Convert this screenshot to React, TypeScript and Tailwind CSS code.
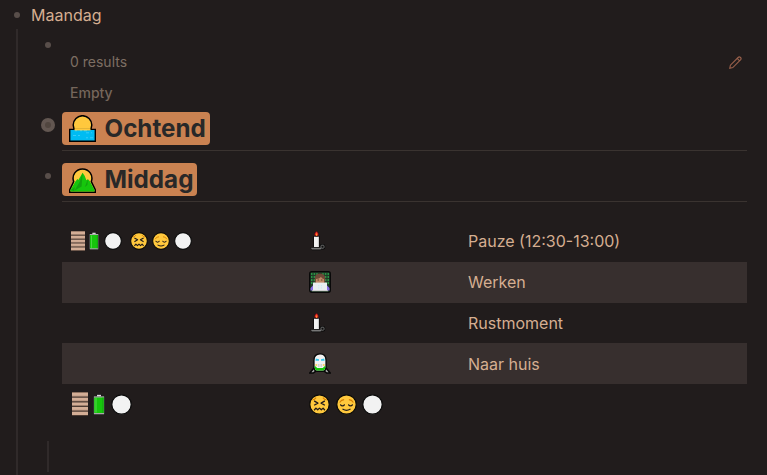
import React from "react";

type IconProps = { className?: string };

function Sunrise({ className }: IconProps) {
  return (
    <svg viewBox="0 0 27 27" className={className}>
      <circle cx="13.5" cy="10" r="9.3" fill="#ffc83d" stroke="#000" strokeWidth="1.5" />
      <path d="M.7 14.4h25.6v11.9H.7z" fill="#00bcf2" stroke="#000" strokeWidth="1.4" />
      <path d="M5.5 14.4h16" stroke="#ffc83d" strokeWidth="2" />
      <path d="M6 15.7h2m3 0h2m2 0h3" stroke="#8dc" strokeWidth=".7" />
      <path d="M4 20.5h3m2 0h2m6-2.7h3m2 0h1m-6 5h2m2 0h3" stroke="#45d1fb" strokeWidth=".8" />
    </svg>
  );
}

function Mountain({ className }: IconProps) {
  return (
    <svg viewBox="0 0 27 27" className={className}>
      <path d="M.7 26.3v-2.5l4-8.2a9.4 9.4 0 1 1 17.6 0l4 8.2v2.5z" fill="#ffc83d" stroke="#000" strokeWidth="1.5" />
      <path d="M1.4 25.6v-1.5l5-8.5 2-2.5 1 1 4.2-7.4 2 3 1.8 4.5 1.6-1 1.7 1.7 4.9 9.2v1.5z" fill="#16c60c" />
      <path d="m13.6 7-3 9-5 8.5 7-4zm5.3 6-3 8 2.5-2zM2 24l4-3-1 4z" fill="#13a10e" />
    </svg>
  );
}

function Planks({ className }: IconProps) {
  return (
    <svg viewBox="0 0 15 20" className={className} preserveAspectRatio="none">
      <path d="M0 0h15v20H0z" fill="#4b3a32" />
      <path d="M0 0h15v1H0z" fill="#8e715f" />
      <path d="M0 2.2h15M0 6.1h15M0 10h15M0 13.9h15M0 17.8h15" stroke="#d4ae96" strokeWidth="2.7" />
      <path d="M0 3.5h15M0 7.4h15M0 11.3h15M0 15.2h15" stroke="#a38370" strokeWidth=".6" />
    </svg>
  );
}

function Battery({ className }: IconProps) {
  return (
    <svg viewBox="0 0 12 21" className={className} preserveAspectRatio="none">
      <path d="M.2 2h3.4V.4h4.8V2h3.4v18.6H.2z" fill="#111" />
      <path d="M.8 2.3h10.4v18H.8z" fill="#aaa" />
      <path d="M4 .8h4v1.5H4z" fill="#ddd" />
      <path d="M1.2 3.5h9.6V19H1.2z" fill="#16c60c" />
      <path d="M3 4v14.5" stroke="#52dc49" strokeWidth="1" />
      <path d="M10 3.5V19" stroke="#13a10e" strokeWidth="1" />
    </svg>
  );
}

function Disc({ className }: IconProps) {
  return (
    <svg viewBox="0 0 22 22" className={className}>
      <circle cx="11" cy="11" r="10.2" fill="#f2f2f2" stroke="#080808" strokeWidth="1.3" />
    </svg>
  );
}

function Confounded({ className }: IconProps) {
  return (
    <svg viewBox="0 0 22 22" className={className}>
      <circle cx="11" cy="11" r="10.2" fill="#ffc83d" stroke="#080808" strokeWidth="1.3" />
      <path d="M3.6 6.2c1.6-.2 2.9-1 3.8-2.4m11 2.4c-1.6-.2-2.9-1-3.8-2.4" fill="none" stroke="#d67d00" strokeWidth="1.1" />
      <path d="m5.4 7.2 3.9 2.3-3.9 2.3m11.2-4.6-3.9 2.3 3.9 2.3M5.4 17l1.8-2.2L9.1 16.6l1.9-1.8 1.9 1.8 1.9-1.8 1.8 2.2" fill="none" stroke="#211b1b" strokeWidth="1.4" strokeLinejoin="round" />
    </svg>
  );
}

function Pensive({ className }: IconProps) {
  return (
    <svg viewBox="0 0 22 22" className={className}>
      <circle cx="11" cy="11" r="10.2" fill="#ffc83d" stroke="#080808" strokeWidth="1.3" />
      <path d="M3.8 8.8c1.1-1.8 2.7-2.8 4.7-2.9m9.7 2.9c-1.1-1.8-2.7-2.8-4.7-2.9" fill="none" stroke="#d67d00" strokeWidth="1.1" />
      <path d="M4.8 11.3c1.1 1.5 2.9 1.5 4 0m4.4 0c1.1 1.5 2.9 1.5 4 0M7.3 16c2.5 1.4 4.9 1.4 7.4 0" fill="none" stroke="#211b1b" strokeWidth="1.3" strokeLinecap="round" />
    </svg>
  );
}

function Candle({ className }: IconProps) {
  return (
    <svg viewBox="0 0 16 20" className={className}>
      <path d="M4 5.7h5V16H4z" fill="#f2f2f2" stroke="#080808" strokeWidth="1.3" paintOrder="stroke" />
      <path d="M8.4 6v9.8" stroke="#bbb" strokeWidth=".8" />
      <path d="M6.5.1C8.1 1.7 8.8 2.8 8.6 4c-.2 1.6-4 1.6-4.2 0-.2-1.3.7-2.4 2.1-3.9Z" fill="#e72727" stroke="#080808" strokeWidth=".5" />
      <path d="M6.5 2.5v2.2" stroke="#ff9a25" strokeWidth="1.1" />
      <path d="M.3 16h11.5l-1.3 3.3H2z" fill="#080808" />
      <rect x="11" y="14.2" width="3" height="3" rx=".8" fill="none" stroke="#080808" strokeWidth="2.5" />
      <path d="M.8 16.8h11l-1.3 1.8H2z" fill="#777" />
      <rect x="11" y="14.2" width="3" height="3" rx=".8" fill="none" stroke="#777" strokeWidth=".9" />
    </svg>
  );
}

function Worker({ className }: IconProps) {
  return (
    <svg viewBox="0 0 22 22" className={className}>
      <rect x=".7" y=".7" width="20.6" height="20.6" rx="2" fill="#203b27" stroke="#080808" strokeWidth="1.3" />
      <path d="M2.7 2v12M5.4 2v10M8 2v2m6-2v2m2.6-2v10m2.7-10v12" stroke="#2b9145" strokeWidth="1.5" strokeDasharray="2 1" />
      <path d="M1.5 19.5V17l3-3h13l3 3v2.5z" fill="#886ce4" />
      <path d="M5.8 12V7C6 4.2 8 2.5 11 2.5s5 1.7 5.2 4.5v5z" fill="#704938" />
      <path d="M7 8c2 0 4-.8 5-2.2.4 1.2 1.5 2 3 2.2v3.5c0 2.5-8 2.5-8 0z" fill="#c08a67" />
      <path d="M8.7 9h1m2.6 0h1" stroke="#38251e" strokeWidth="1" />
      <path d="M4 11.6h14V20H4z" fill="#e8edf0" />
      <path d="M9.2 14.6h1.1m1.6 0H13m-3.8 2.3h1.1m1.6 0H13" stroke="#c9e8f3" strokeWidth="1.1" />
      <path d="M3 19.7h16" stroke="#ccc" strokeWidth="1" />
    </svg>
  );
}

function Train({ className }: IconProps) {
  return (
    <svg viewBox="0 0 22 22" className={className}>
      <path d="M5.4 14.5.8 20h3.5l2.9-2.2h7.6l2.9 2.2h3.5l-4.6-5.5" fill="#aaa" stroke="#080808" strokeWidth="1.5" />
      <path d="M4.9 13V7.5C4.9 3.3 7.2.9 11 .9s6.1 2.4 6.1 6.6V13c0 3.5-1.4 5.3-3.2 5.3H8.1c-1.8 0-3.2-1.8-3.2-5.3Z" fill="#f2f2f2" stroke="#080808" strokeWidth="1.4" />
      <path d="M5.5 12.8c1.1.5 2 1.2 2.7 2.2h5.6c.7-1 1.6-1.7 2.7-2.2 0 3-.9 4.8-2.5 4.8H8c-1.6 0-2.5-1.8-2.5-4.8Z" fill="#16c60c" />
      <path d="m6.8 5.5 3.2.8v1.4H6.4zm8.4 0-3.2.8v1.4h3.6z" fill="#35c8ef" />
      <path d="M6.4 12h1.8m5.6 0h1.8" stroke="#ffc83d" strokeWidth="1.5" />
      <path d="M9.5 11v3M11 11v3m1.5-3v3" stroke="#bbb" strokeWidth=".6" />
    </svg>
  );
}

function Bullet() {
  return <span className="block size-[6px] rounded-full bg-[#584e4a]" />;
}

function Heading({ icon, children }: { icon: React.ReactNode; children: React.ReactNode }) {
  return (
    <div className="ml-[62px] mr-5 flex h-[39px] items-start border-b border-[#3a3330]">
      <h2 className="flex h-[33px] items-center rounded-[4px] bg-[#ca8251] pl-[7px] pr-1 text-[24.2px] leading-[33px] font-bold text-[#282828]">
        {icon}
        <span className="ml-[8.5px]">{children}</span>
      </h2>
    </div>
  );
}

export default function App() {
  return (
    <main className="relative flex h-[475px] w-[767px] flex-col overflow-hidden bg-[#211c1c] font-['Inter',sans-serif] text-[#d5ae91]">
      <span className="absolute top-[29px] left-4 h-[446px] w-[2px] bg-[#302a2a]" />
      <span className="absolute top-[441px] left-[47px] h-[31px] w-[2px] bg-[#302a2a]" />

      <div className="flex h-[30px] items-center pl-[14px] text-base">
        <Bullet />
        <span className="ml-[11px]">Maandag</span>
      </div>

      <section className="flex h-[82px] pl-[45px] text-sm text-[#7d6e63]">
        <div className="pt-[12px]"><Bullet /></div>
        <div className="ml-[19px] flex flex-1 flex-col pt-[22px]">
          <div className="flex h-5 items-center justify-between pr-[25px]">
            <span>0 results</span>
            <svg viewBox="0 0 13 13" className="size-[13px]" fill="none" stroke="#99604b" strokeWidth="1.1">
              <path d="m.8 12.2.6-3 7.7-7.7c.8-.8 1.6-.8 2.4 0s.8 1.6 0 2.4l-7.7 7.7zM8.2 2.4l2.4 2.4" />
            </svg>
          </div>
          <div className="mt-[11px] leading-5 font-medium text-[#75665b]">Empty</div>
        </div>
      </section>

      <section className="relative">
        <span className="absolute top-[6px] left-[41px] flex size-[14px] items-center justify-center rounded-full bg-[#635751]">
          <span className="size-[6px] rounded-full bg-[#51463f]" />
        </span>
        <Heading icon={<Sunrise className="size-[27px]" />}>Ochtend</Heading>
      </section>

      <section className="relative mt-3">
        <span className="absolute top-[10px] left-[45px]"><Bullet /></span>
        <Heading icon={<Mountain className="size-[27px]" />}>Middag</Heading>
      </section>

      <div className="mt-[19px] mr-5 ml-[62px] flex flex-col text-base">
        <div className="grid h-[41px] grid-cols-[247px_159px_1fr] items-center pb-[2px]">
          <div className="flex items-center pl-[9px]">
            <Planks className="h-5 w-[14px]" />
            <Battery className="ml-1 h-[18px] w-[10px]" />
            <Disc className="ml-[4.5px] size-[18px]" />
            <Confounded className="ml-[8px] size-[18px]" />
            <Pensive className="ml-1 size-[18px]" />
            <Disc className="ml-1 size-[18px]" />
          </div>
          <Candle className="ml-px h-5 w-4" />
          <span>Pauze (12:30-13:00)</span>
        </div>
        <div className="grid h-[41px] grid-cols-[247px_159px_1fr] items-center bg-[#372f2e] pb-px">
          <span />
          <Worker className="size-[22px]" />
          <span>Werken</span>
        </div>
        <div className="grid h-10 grid-cols-[247px_159px_1fr] items-center">
          <span />
          <Candle className="ml-px h-5 w-4" />
          <span>Rustmoment</span>
        </div>
        <div className="grid h-[41px] grid-cols-[247px_159px_1fr] items-center bg-[#372f2e]">
          <span />
          <Train className="size-[22px]" />
          <span>Naar huis</span>
        </div>
        <div className="grid h-10 grid-cols-[247px_1fr] items-center">
          <div className="flex items-center pl-[10px]">
            <Planks className="h-6 w-4" />
            <Battery className="ml-[5px] h-[21px] w-3" />
            <Disc className="ml-[6px] size-[21px]" />
          </div>
          <div className="flex items-center gap-[5.5px]">
            <Confounded className="size-[21px]" />
            <Pensive className="size-[21px]" />
            <Disc className="size-[21px]" />
          </div>
        </div>
      </div>
    </main>
  );
}
